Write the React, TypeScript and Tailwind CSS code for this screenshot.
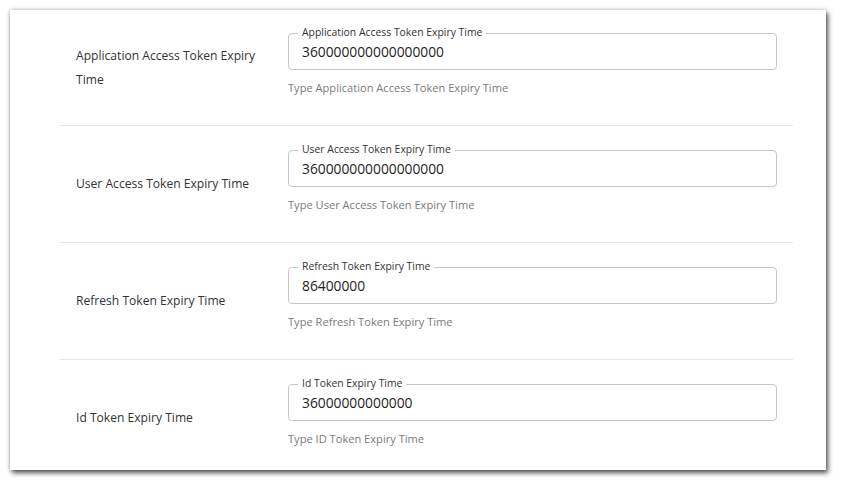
import React from "react";

type Row = { label: string; field: string; value: string; helper: string };

const rows: Row[] = [
  {
    label: "Application Access Token Expiry Time",
    field: "Application Access Token Expiry Time",
    value: "360000000000000000",
    helper: "Type Application Access Token Expiry Time",
  },
  {
    label: "User Access Token Expiry Time",
    field: "User Access Token Expiry Time",
    value: "360000000000000000",
    helper: "Type User Access Token Expiry Time",
  },
  {
    label: "Refresh Token Expiry Time",
    field: "Refresh Token Expiry Time",
    value: "86400000",
    helper: "Type Refresh Token Expiry Time",
  },
  {
    label: "Id Token Expiry Time",
    field: "Id Token Expiry Time",
    value: "36000000000000",
    helper: "Type ID Token Expiry Time",
  },
];

export default function App() {
  return (
    <div
      className="w-[842px] h-[487px] bg-white overflow-hidden"
      style={{ fontFamily: '"Open Sans", "Noto Sans", sans-serif' }}
    >
      <div className="ml-[10px] mt-[10px] w-[816px] h-[460px] bg-white overflow-hidden shadow-[2px_3px_5px_rgba(0,0,0,0.65),0_0_4px_rgba(0,0,0,0.25)] pl-[50px] pr-[33px]">
        {rows.map((r, i) => (
          <div
            key={i}
            className={`flex items-center border-b border-[#e6e6e6] ${i === 0 ? "pt-[23px]" : "pt-[24px]"} pb-[30px]`}
          >
            <div
              className={`w-[228px] shrink-0 pl-4 pr-6 ${i === 0 ? "pt-[7px]" : "pt-[5px]"} text-[12.1px] leading-[24px] text-[#333]`}
            >
              {r.label}
            </div>
            <div className="flex-1 pr-4">
              <div className="relative h-[37px] border border-[#c6c6c6] rounded-[4px] flex items-center pl-[13px]">
                <span className="absolute -top-[9px] left-[9px] bg-white px-1 text-[10.4px] leading-[14px] text-[#333]">
                  {r.field}
                </span>
                <span className="text-[13.8px] text-[#222] leading-[20px]">{r.value}</span>
              </div>
              <div className="mt-[10px] text-[11.1px] leading-[15px] text-[#7a7a7a]">
                {r.helper}
              </div>
            </div>
          </div>
        ))}
      </div>
    </div>
  );
}
